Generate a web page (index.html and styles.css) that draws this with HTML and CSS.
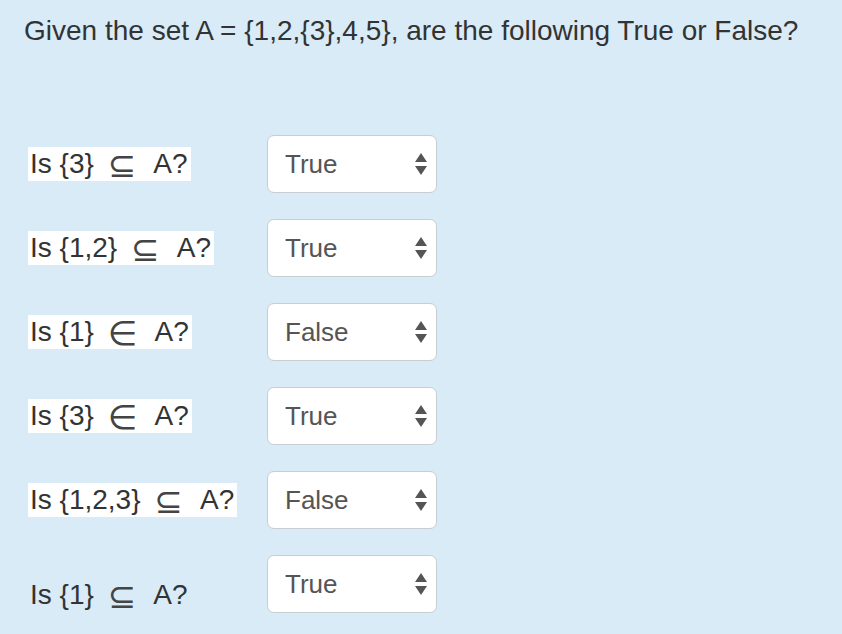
FILE: index.html
```html
<!DOCTYPE html>
<html>
<head>
<meta charset="utf-8">
<link rel="stylesheet" href="styles.css">
</head>
<body>
<div class="page">
  <h1 class="title">Given the set A = {1,2,{3},4,5}, are the following True or False?</h1>
  <div class="rows">
    <div class="row">
      <span class="label hl">Is {3} <span class="sym">⊆</span> A?</span>
      <div class="select"><span class="val">True</span><svg class="arr" width="12" height="24" viewBox="0 0 12 24"><path d="M6 1 L12 10 L0 10 Z M6 23 L12 14 L0 14 Z" fill="#555"/></svg></div>
    </div>
    <div class="row">
      <span class="label hl">Is {1,2} <span class="sym">⊆</span> A?</span>
      <div class="select"><span class="val">True</span><svg class="arr" width="12" height="24" viewBox="0 0 12 24"><path d="M6 1 L12 10 L0 10 Z M6 23 L12 14 L0 14 Z" fill="#555"/></svg></div>
    </div>
    <div class="row">
      <span class="label hl">Is {1} <span class="sym">∈</span> A?</span>
      <div class="select"><span class="val">False</span><svg class="arr" width="12" height="24" viewBox="0 0 12 24"><path d="M6 1 L12 10 L0 10 Z M6 23 L12 14 L0 14 Z" fill="#555"/></svg></div>
    </div>
    <div class="row">
      <span class="label hl">Is {3} <span class="sym">∈</span> A?</span>
      <div class="select"><span class="val">True</span><svg class="arr" width="12" height="24" viewBox="0 0 12 24"><path d="M6 1 L12 10 L0 10 Z M6 23 L12 14 L0 14 Z" fill="#555"/></svg></div>
    </div>
    <div class="row">
      <span class="label hl">Is {1,2,3} <span class="sym">⊆</span> A?</span>
      <div class="select"><span class="val">False</span><svg class="arr" width="12" height="24" viewBox="0 0 12 24"><path d="M6 1 L12 10 L0 10 Z M6 23 L12 14 L0 14 Z" fill="#555"/></svg></div>
    </div>
    <div class="row last">
      <span class="label">Is {1} <span class="sym">⊆</span> A?</span>
      <div class="select"><span class="val">True</span><svg class="arr" width="12" height="24" viewBox="0 0 12 24"><path d="M6 1 L12 10 L0 10 Z M6 23 L12 14 L0 14 Z" fill="#555"/></svg></div>
    </div>
  </div>
</div>
</body>
</html>
```
FILE: styles.css
```css
html, body {
  margin: 0;
  padding: 0;
  background: #d9ebf7;
}
.page {
  width: 842px;
  height: 634px;
  padding: 14px 0 0 24px;
  box-sizing: border-box;
  font-family: "Liberation Sans", Arial, sans-serif;
  color: #333;
  overflow: hidden;
}
.title {
  margin: 0;
  font-size: 28px;
  font-weight: normal;
  line-height: 34px;
  color: #333;
}
.rows {
  margin: 87px 0 0 4px;
  display: flex;
  flex-direction: column;
  gap: 26px;
}
.row {
  display: grid;
  grid-template-columns: 239px 170px;
  align-items: center;
  height: 58px;
}
.label {
  justify-self: start;
  font-size: 28px;
  line-height: 34px;
  height: 34px;
  padding: 0 3px 0 2px;
  white-space: nowrap;
  overflow: visible;
}
.label.hl {
  background: #fff;
}
.sym {
  display: inline-block;
  margin: 0 11px 0 6px;
  font-family: "DejaVu Sans", sans-serif;
  font-size: 34px;
  line-height: 34px;
  vertical-align: -4px;
  color: #444;
}
.row.last .label {
  margin-top: 22px;
}
.select {
  box-sizing: border-box;
  height: 58px;
  background: #fff;
  border: 1px solid #c8cdd1;
  border-radius: 7px;
  display: flex;
  align-items: center;
  justify-content: space-between;
  padding: 0 9px 0 17px;
}
.val {
  font-size: 26px;
  color: #555;
}
.arr {
  display: block;
}
```
